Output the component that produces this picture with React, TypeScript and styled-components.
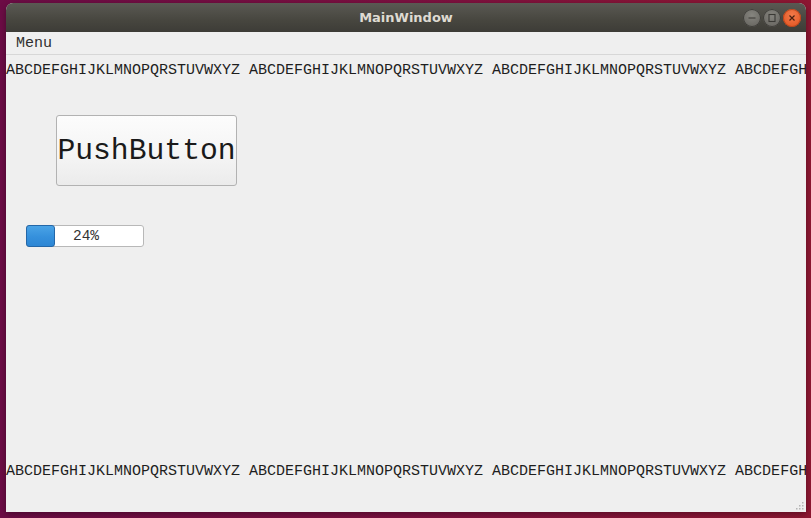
import * as React from "react";
import styled, { createGlobalStyle } from "styled-components";

const GlobalStyle = createGlobalStyle`
  html, body {
    margin: 0;
    padding: 0;
    overflow: hidden;
  }
`;

const MONO = `"Liberation Mono", "Courier New", monospace`;
const ALPHABET = "ABCDEFGHIJKLMNOPQRSTUVWXYZ";

const Desktop = styled("div")`
  width: 811px;
  height: 518px;
  box-sizing: border-box;
  padding: 3px 5px 6px 6px;
  background: linear-gradient(90deg, #6c0c45 0%, #7c1040 50%, #8e1732 100%);
  display: flex;
`;

const Window = styled("div")`
  flex: 1;
  display: flex;
  flex-direction: column;
  border-radius: 7px 7px 0 0;
  overflow: hidden;
  background: #efefef;
  box-shadow: 0 2px 6px rgba(0, 0, 0, 0.35);
`;

const TitleBar = styled("div")`
  height: 29px;
  position: relative;
  display: flex;
  align-items: center;
  justify-content: center;
  background: linear-gradient(180deg, #5a5953 0%, #47463f 60%, #3d3c37 100%);
  color: #dfdbd2;
  font-family: "DejaVu Sans", "Noto Sans", sans-serif;
  font-weight: bold;
  font-size: 13px;
`;

const Controls = styled("div")`
  position: absolute;
  right: 5px;
  top: 6px;
  display: flex;
  gap: 2px;
`;

const Circle = styled("div")<{ $close?: boolean }>`
  width: 18px;
  height: 18px;
  border-radius: 50%;
  display: flex;
  align-items: center;
  justify-content: center;
  background: ${(p) =>
    p.$close
      ? "radial-gradient(circle at 50% 35%, #f37a4a, #e0501c)"
      : "radial-gradient(circle at 50% 35%, #86857f, #615f5a)"};
  box-shadow: inset 0 0 0 1px ${(p) => (p.$close ? "#b9461d" : "#3e3d39")};
`;

const MenuBar = styled("div")`
  height: 22px;
  border-bottom: 1px solid #d7d7d7;
  display: flex;
  align-items: center;
  padding-left: 10px;
  font-family: ${MONO};
  font-size: 15px;
  color: #2e2e2e;
`;

const Central = styled("div")`
  flex: 1;
  display: flex;
  flex-direction: column;
  position: relative;
`;

const Marquee = styled("div")<{ $top?: number; $bottom?: number }>`
  margin-top: ${(p) => p.$top ?? 0}px;
  margin-bottom: ${(p) => p.$bottom ?? 0}px;
  font-family: ${MONO};
  font-size: 15px;
  line-height: 18px;
  color: #1e1e1e;
  white-space: nowrap;
  overflow: hidden;
`;

const Body = styled("div")`
  flex: 1;
  display: flex;
  flex-direction: column;
  align-items: flex-start;
`;

const PushButton = styled("button")`
  margin: 35px 0 0 50px;
  width: 181px;
  height: 71px;
  padding: 0;
  border: 1px solid #b2b2b2;
  border-radius: 3px;
  background: linear-gradient(180deg, #fcfcfc 0%, #f4f4f4 60%, #ebebeb 100%);
  font-family: ${MONO};
  font-size: 29.7px;
  color: #1a1a1a;
`;

const Progress = styled("div")`
  margin: 39px 0 0 20px;
  width: 118px;
  height: 22px;
  box-sizing: border-box;
  border: 1px solid #b8b8b8;
  border-radius: 3px;
  background: #ffffff;
  position: relative;
  display: flex;
  align-items: center;
  justify-content: center;
  font-family: ${MONO};
  font-size: 14.5px;
  color: #333;
`;

const Chunk = styled("div")`
  position: absolute;
  left: -1px;
  top: -1px;
  bottom: -1px;
  box-sizing: border-box;
  border: 1px solid #2467a8;
  border-radius: 3px;
  background: linear-gradient(180deg, #4aa3e6 0%, #3590dc 55%, #2d86d4 100%);
`;

const Label = styled("span")`
  position: relative;
  margin-left: 2px;
`;

const Grip = styled("svg")`
  position: absolute;
  right: 2px;
  bottom: 2px;
`;

function repeated(n: number) {
  return Array.from({ length: n }, () => ALPHABET).join(" ");
}

function MainWindow(): JSX.Element {
  const value = 24;
  const barWidth = 118;

  return (
    <Desktop>
      <GlobalStyle />
      <Window>
        <TitleBar>
          MainWindow
          <Controls>
            <Circle>
              <svg width="10" height="10" viewBox="0 0 10 10">
                <line x1="1.5" y1="5" x2="8.5" y2="5" stroke="#3a3935" strokeWidth="1.2" />
              </svg>
            </Circle>
            <Circle>
              <svg width="10" height="10" viewBox="0 0 10 10">
                <rect x="2" y="1.5" width="6" height="7" fill="none" stroke="#3a3935" strokeWidth="1.1" />
              </svg>
            </Circle>
            <Circle $close>
              <svg width="10" height="10" viewBox="0 0 10 10">
                <path d="M2.5 2.5 L7.5 7.5 M7.5 2.5 L2.5 7.5" stroke="#4a2010" strokeWidth="1.2" />
              </svg>
            </Circle>
          </Controls>
        </TitleBar>
        <MenuBar>Menu</MenuBar>
        <Central>
          <Marquee $top={7}>{repeated(4)}</Marquee>
          <Body>
            <PushButton>PushButton</PushButton>
            <Progress>
              <Chunk style={{ width: Math.round((barWidth * value) / 100) + 1 }} />
              <Label>{value}%</Label>
            </Progress>
          </Body>
          <Marquee $bottom={31}>{repeated(4)}</Marquee>
          <Grip width="10" height="10" viewBox="0 0 10 10">
            {[
              [8, 0],
              [8, 3],
              [5, 3],
              [8, 6],
              [5, 6],
              [2, 6],
            ].map(([x, y]) => (
              <rect key={`${x}-${y}`} x={x} y={y + 2} width="1.5" height="1.5" fill="#b5b5b5" />
            ))}
          </Grip>
        </Central>
      </Window>
    </Desktop>
  );
}

export default MainWindow;
